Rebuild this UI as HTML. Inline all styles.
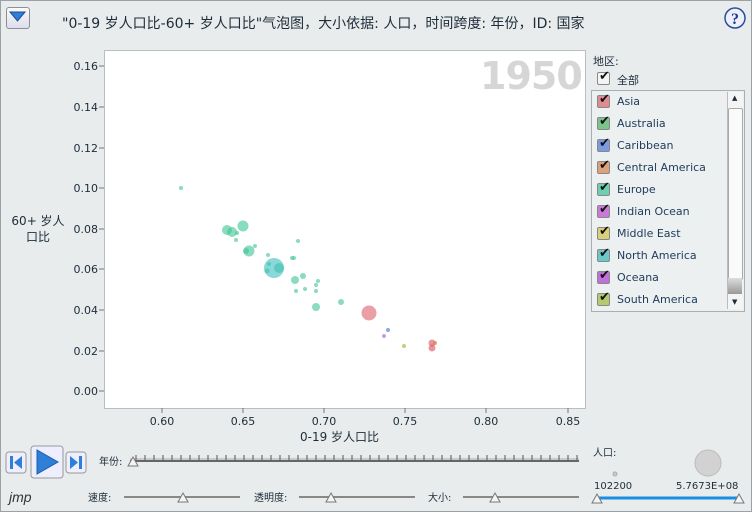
<!DOCTYPE html><html><head><meta charset="utf-8"><style>
body{margin:0;width:752px;height:512px;overflow:hidden;background:#e8ecec;font-family:"DejaVu Sans","Noto Sans CJK SC",sans-serif;color:#1e2c3a;position:relative}
.a{position:absolute}
.t{font-size:11px}
.cb{position:absolute;width:11px;height:11px;border:1px solid #888;border-radius:2px}
.cb:after{content:"✔";position:absolute;left:1px;top:-4px;font-size:13px;color:#111}
.lg{position:absolute;left:617px;font-size:11px;color:#1e3a5a}
</style></head><body>
<div class="a" style="left:0;top:0;width:750px;height:510px;border:1px solid #9aa2a8"></div>
<div class="a" style="left:6px;top:7px;width:22px;height:20px;border:1px solid #8a9096;border-radius:3px;background:linear-gradient(#fafafa,#dde)"></div>
<svg class="a" style="left:9px;top:11px" width="17" height="12"><path d="M1 1h15l-7.5 9z" fill="#2f7fd6" stroke="#1a4f9a"/></svg>
<div class="a" style="left:62px;top:13px;font-size:14px;color:#1e2c3a">"0-19 岁人口比-60+ 岁人口比"气泡图，大小依据: 人口，时间跨度: 年份，ID: 国家</div>
<svg class="a" style="left:724px;top:7px" width="22" height="22"><circle cx="11" cy="11" r="10" fill="#eef" stroke="#2a4f9a" stroke-width="1.5"/><text x="11" y="17" font-size="16" font-weight="bold" text-anchor="middle" fill="#1a3f8a" font-family="Liberation Serif">?</text></svg>
<div class="a" style="left:104px;top:50px;width:480px;height:357px;background:#fff;border:1px solid #b8bec2"></div>
<div class="a" style="left:480px;top:54px;font-size:38px;font-weight:bold;color:#d6d6d6;letter-spacing:-1px">1950</div>
<svg class="a" style="left:0;top:0" width="600" height="450">
<g font-size="11" fill="#1e2c3a" font-family="DejaVu Sans" text-anchor="end">
<text x="98" y="70">0.16</text><text x="98" y="111">0.14</text><text x="98" y="152">0.12</text><text x="98" y="192">0.10</text><text x="98" y="233">0.08</text><text x="98" y="273">0.06</text><text x="98" y="314">0.04</text><text x="98" y="355">0.02</text><text x="98" y="395">0.00</text></g>
<g stroke="#777"><path d="M99 66h5M99 107h5M99 148h5M99 188h5M99 229h5M99 269h5M99 310h5M99 351h5M99 391h5M162 408v5M243 408v5M324 408v5M405 408v5M486 408v5M568 408v5"/></g>
<g font-size="11" fill="#1e2c3a" font-family="DejaVu Sans" text-anchor="middle">
<text x="162" y="425">0.60</text><text x="243" y="425">0.65</text><text x="324" y="425">0.70</text><text x="405" y="425">0.75</text><text x="486" y="425">0.80</text><text x="568" y="425">0.85</text></g>
<g fill="#3cc495" fill-opacity="0.6">
<circle cx="181" cy="188" r="2"/><circle cx="227" cy="230" r="5"/><circle cx="232" cy="232" r="5"/><circle cx="243" cy="226" r="5.5"/><circle cx="237" cy="233" r="2"/><circle cx="236" cy="240" r="2"/><circle cx="249" cy="251" r="5.5"/><circle cx="246" cy="251" r="3"/><circle cx="255" cy="246" r="2"/><circle cx="298" cy="241" r="2"/><circle cx="268" cy="255" r="2"/><circle cx="292" cy="258" r="2"/><circle cx="294" cy="258" r="2"/><circle cx="279" cy="268" r="5"/><circle cx="269" cy="264" r="2"/><circle cx="267" cy="271" r="2.5"/><circle cx="295" cy="280" r="4"/><circle cx="303" cy="276" r="3"/><circle cx="318" cy="281" r="2"/><circle cx="316" cy="285" r="2"/><circle cx="305" cy="289" r="2"/><circle cx="296" cy="291" r="2"/><circle cx="316" cy="291" r="2"/><circle cx="316" cy="307" r="4"/><circle cx="341" cy="302" r="3"/></g>
<circle cx="274" cy="268" r="10" fill="#3cbec0" fill-opacity="0.6"/>
<circle cx="369" cy="313" r="7.5" fill="#d9505e" fill-opacity="0.55"/>
<circle cx="388" cy="330" r="2" fill="#5a80d8" fill-opacity="0.7"/>
<circle cx="384" cy="336" r="2" fill="#b050d8" fill-opacity="0.6"/>
<circle cx="404" cy="346" r="2" fill="#b0b840" fill-opacity="0.7"/>
<circle cx="432" cy="343" r="3.5" fill="#d9505e" fill-opacity="0.6"/><circle cx="432" cy="348" r="3.5" fill="#d9505e" fill-opacity="0.6"/><circle cx="435" cy="343" r="2" fill="#d88040" fill-opacity="0.7"/>
</svg>
<div class="a" style="left:4px;top:213px;font-size:12px;text-align:center;width:68px;line-height:16px;white-space:nowrap">60+ 岁人<br>口比</div>
<div class="a" style="left:300px;top:428px;font-size:12px">0-19 岁人口比</div>
<div class="a t" style="left:593px;top:53px">地区:</div>
<div class="cb" style="left:597px;top:72px;background:#f4f4f4"></div><div class="a t" style="left:617px;top:72px">全部</div>
<div class="a" style="left:591px;top:90px;width:152px;height:220px;border:1px solid #a8aeb2;background:#ecf0f0"></div>
<div class="a" style="left:727px;top:92px;width:15px;height:217px;background:#f4f4f4;border-left:1px solid #bbb"></div>
<div class="a" style="left:728px;top:108px;width:13px;height:170px;background:#fafafa;border:1px solid #aaa;border-radius:2px"></div>
<div class="a" style="left:728px;top:278px;width:14px;height:16px;background:linear-gradient(#ddd,#999)"></div>
<div class="a" style="left:732px;top:94px;font-size:7px">▲</div><div class="a" style="left:732px;top:298px;font-size:7px">▼</div>
<div class="cb" style="left:597px;top:95px;background:#e08a92"></div><div class="lg" style="top:95px">Asia</div>
<div class="cb" style="left:597px;top:117px;background:#7cc48e"></div><div class="lg" style="top:117px">Australia</div>
<div class="cb" style="left:597px;top:139px;background:#7c9ae0"></div><div class="lg" style="top:139px">Caribbean</div>
<div class="cb" style="left:597px;top:161px;background:#dca07a"></div><div class="lg" style="top:161px">Central America</div>
<div class="cb" style="left:597px;top:183px;background:#6cd0b0"></div><div class="lg" style="top:183px">Europe</div>
<div class="cb" style="left:597px;top:205px;background:#cc78d8"></div><div class="lg" style="top:205px">Indian Ocean</div>
<div class="cb" style="left:597px;top:227px;background:#d8d07a"></div><div class="lg" style="top:227px">Middle East</div>
<div class="cb" style="left:597px;top:249px;background:#6cc8c8"></div><div class="lg" style="top:249px">North America</div>
<div class="cb" style="left:597px;top:271px;background:#c070d8"></div><div class="lg" style="top:271px">Oceana</div>
<div class="cb" style="left:597px;top:293px;background:#b8c870"></div><div class="lg" style="top:293px">South America</div>
<svg class="a" style="left:0;top:440px" width="752" height="72">
<rect x="6" y="12" width="20" height="21" rx="3" fill="#eef" stroke="#999"/><path d="M10 16h3v13h-3zM22 16v13l-8-6.5z" fill="#2f7fd6"/>
<rect x="31" y="6" width="32" height="32" rx="3" fill="#eef" stroke="#999"/><path d="M37 10v24l21-12z" fill="#2f7fd6" stroke="#1a5fb0"/>
<rect x="66" y="12" width="20" height="21" rx="3" fill="#eef" stroke="#999"/><path d="M70 16v13l8-6.5zM79 16h3v13h-3z" fill="#2f7fd6"/>
<text x="9" y="62" font-size="14" font-style="italic" fill="#333" font-family="Liberation Sans">jmp</text>
<text x="99" y="25" font-size="10" fill="#1e2c3a">年份:</text>
<path d="M130 21h449" stroke="#666" stroke-width="2"/><path d="M130 19h449" stroke="#aaa"/>
<path d="M136 15v5M145 15v5M154 15v5M163 15v5M172 15v5M181 15v5M190 15v5M199 15v5M208 15v5M217 15v5M226 15v5M235 15v5M244 15v5M253 15v5M262 15v5M271 15v5M280 15v5M289 15v5M298 15v5M307 15v5M316 15v5M325 15v5M334 15v5M343 15v5M352 15v5M361 15v5M370 15v5M379 15v5M388 15v5M397 15v5M406 15v5M415 15v5M424 15v5M433 15v5M442 15v5M451 15v5M460 15v5M469 15v5M478 15v5M487 15v5M496 15v5M505 15v5M514 15v5M523 15v5M532 15v5M541 15v5M550 15v5M559 15v5M568 15v5M577 15v5" stroke="#555"/>
<path d="M128 26l5-9 5 9z" fill="#f4f4f4" stroke="#777"/>
<text x="88" y="61" font-size="10" fill="#1e2c3a">速度:</text><path d="M124 57h116" stroke="#888" stroke-width="2"/><path d="M178 62l5-9 5 9z" fill="#f4f4f4" stroke="#777"/>
<text x="254" y="61" font-size="10" fill="#1e2c3a">透明度:</text><path d="M299 57h116" stroke="#888" stroke-width="2"/><path d="M326 62l5-9 5 9z" fill="#f4f4f4" stroke="#777"/>
<text x="428" y="61" font-size="10" fill="#1e2c3a">大小:</text><path d="M463 57h116" stroke="#888" stroke-width="2"/><path d="M490 62l5-9 5 9z" fill="#f4f4f4" stroke="#777"/>
<text x="593" y="16" font-size="10" fill="#1e2c3a">人口:</text>
<circle cx="615" cy="34" r="2" fill="#ccc" stroke="#aaa"/><circle cx="708" cy="23" r="13" fill="#d2d2d2" stroke="#bbb"/>
<text x="594" y="49" font-size="10" fill="#1e2c3a">102200</text><text x="676" y="49" font-size="10" fill="#1e2c3a">5.7673E+08</text>
<path d="M597 58h142" stroke="#1a8ee0" stroke-width="3"/>
<path d="M592 63l5-9 5 9zM734 63l5-9 5 9z" fill="#f4f4f4" stroke="#777"/>
</svg>
</body></html>
